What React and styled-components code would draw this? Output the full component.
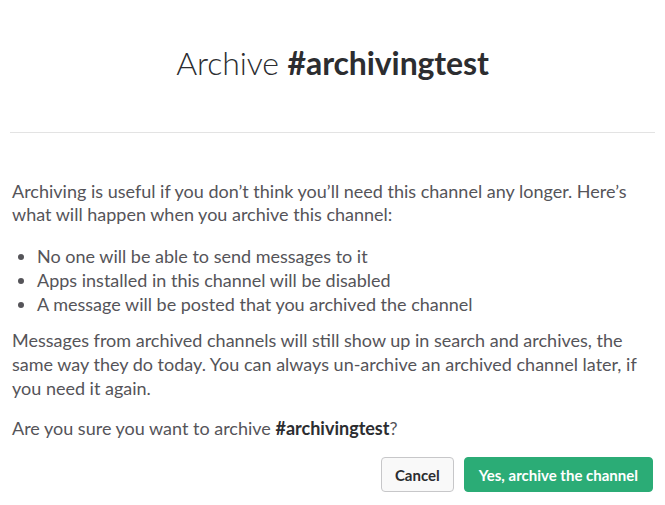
import React from "react";
import styled, { createGlobalStyle } from "styled-components";

const GlobalStyle = createGlobalStyle`
  body {
    margin: 0;
    background: #fff;
    font-family: Lato, "Open Sans", sans-serif;
  }
`;

const Modal = styled.div`
  width: 665px;
  height: 505px;
  box-sizing: border-box;
  padding: 0 12px;
  background: #fff;
`;

const Header = styled.div`
  height: 132px;
  display: flex;
  align-items: center;
  justify-content: center;
  border-bottom: 1px solid #e3e3e3;
  margin: 0 -2px;
`;

const Title = styled.h1`
  margin: 0;
  font-size: 32px;
  font-weight: 300;
  color: #2c2d30;
  letter-spacing: -0.1px;
  padding-bottom: 8px;
  strong {
    font-weight: 700;
  }
`;

const Body = styled.div`
  padding-top: 47px;
  color: #555459;
  font-size: 18px;
  line-height: 24px;
`;

const Para = styled.p`
  margin: 0 0 ${(p) => p.gap || 17}px;
  line-height: ${(p) => p.lh || 24}px;
  strong {
    color: #2c2d30;
    font-weight: 700;
  }
`;

const List = styled.ul`
  margin: 0 0 12px;
  padding-left: 25px;
  li {
    line-height: 24px;
  }
`;

const Actions = styled.div`
  display: flex;
  justify-content: flex-end;
  gap: 10px;
`;

const Button = styled.button`
  height: 35px;
  padding: 0 ${(p) => (p.primary ? 14 : 13)}px;
  font-family: Lato, sans-serif;
  font-size: 15px;
  font-weight: 700;
  border-radius: 4px;
  cursor: pointer;
  border: 1px solid ${(p) => (p.primary ? "#2bac76" : "#c7c7c9")};
  background: ${(p) => (p.primary ? "#2bac76" : "#f9f9f9")};
  color: ${(p) => (p.primary ? "#fff" : "#2c2d30")};
`;

const App = () => {
  return (
    <>
      <GlobalStyle />
      <Modal>
        <Header>
          <Title>
            Archive <strong>#archivingtest</strong>
          </Title>
        </Header>
        <Body>
          <Para gap={18} lh={23}>
            Archiving is useful if you don’t think you’ll need this channel any
            longer. Here’s what will happen when you archive this channel:
          </Para>
          <List>
            <li>No one will be able to send messages to it</li>
            <li>Apps installed in this channel will be disabled</li>
            <li>A message will be posted that you archived the channel</li>
          </List>
          <Para gap={16}>
            Messages from archived channels will still show up in search and
            archives, the same way they do today. You can always un-archive an
            archived channel later, if you need it again.
          </Para>
          <Para gap={17}>
            Are you sure you want to archive <strong>#archivingtest</strong>?
          </Para>
          <Actions>
            <Button>Cancel</Button>
            <Button primary>Yes, archive the channel</Button>
          </Actions>
        </Body>
      </Modal>
    </>
  );
};

export default App;
